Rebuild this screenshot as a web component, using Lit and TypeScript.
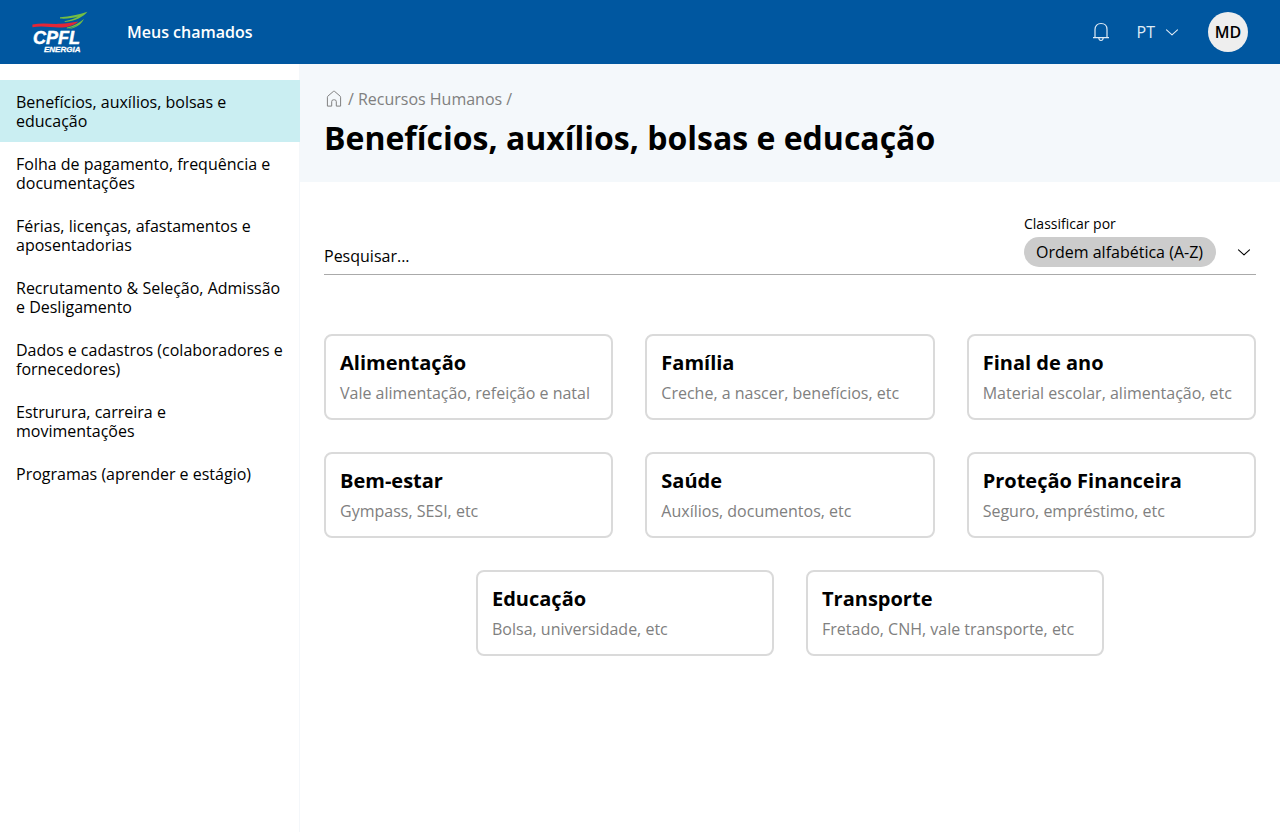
import { LitElement, html, css } from "lit";
import { customElement, state } from "lit/decorators.js";
import { classMap } from "lit/directives/class-map.js";

interface Topic {
  title: string;
  detail: string;
}

const CATEGORIES: string[] = [
  "Benefícios, auxílios, bolsas e educação",
  "Folha de pagamento, frequência e documentações",
  "Férias, licenças, afastamentos e aposentadorias",
  "Recrutamento & Seleção, Admissão e Desligamento",
  "Dados e cadastros (colaboradores e fornecedores)",
  "Estrurura, carreira e movimentações",
  "Programas (aprender e estágio)",
];

const TOPICS: Topic[] = [
  { title: "Alimentação", detail: "Vale alimentação, refeição e natal" },
  { title: "Família", detail: "Creche, a nascer, benefícios, etc" },
  { title: "Final de ano", detail: "Material escolar, alimentação, etc" },
  { title: "Bem-estar", detail: "Gympass, SESI, etc" },
  { title: "Saúde", detail: "Auxílios, documentos, etc" },
  { title: "Proteção Financeira", detail: "Seguro, empréstimo, etc" },
  { title: "Educação", detail: "Bolsa, universidade, etc" },
  { title: "Transporte", detail: "Fretado, CNH, vale transporte, etc" },
];

const chevron = html`<svg class="chevron" width="14" height="8" viewBox="0 0 14 8" fill="none" stroke="currentColor" stroke-width="1.1" stroke-linecap="round" stroke-linejoin="round" aria-hidden="true">
  <path d="M1.5 1.8 7 6.8 12.5 1.8" />
</svg>`;

@customElement("app-header")
class AppHeader extends LitElement {
  static styles = css`
    :host {
      display: block;
      background: #0057a0;
      color: #fff;
    }
    .bar {
      display: flex;
      align-items: center;
      height: 64px;
      padding: 0 32px;
      box-sizing: border-box;
    }
    .logo {
      display: block;
      margin-right: 39px;
    }
    .logo svg,
    .bell svg,
    .chevron {
      display: block;
    }
    .nav {
      color: inherit;
      font-weight: 600;
      text-decoration: none;
      margin-right: auto;
    }
    button {
      font: inherit;
      color: #dfebf5;
      background: none;
      border: 0;
      padding: 0;
      cursor: pointer;
    }
    .bell {
      margin-right: 27px;
    }
    .language {
      display: flex;
      align-items: center;
      gap: 10px;
      margin-right: 29px;
    }
    .avatar {
      width: 40px;
      height: 40px;
      border-radius: 50%;
      background: #eee;
      color: #000;
      font-weight: 600;
    }
  `;

  render() {
    return html`<header class="bar">
      <a class="logo" href="#" aria-label="CPFL Energia">
        <svg width="56" height="42" viewBox="0 0 56 42">
          <path d="M28 6.3C38 5.6 47 3.6 55.4.8 53.4 3.6 50 5.8 46.6 7.4 42.6 9.2 38 10.3 32.8 11L32.6 10.2C38.4 9 42.6 7.8 46 5.6 40.8 7.3 34.8 7.9 28 7.6Z" fill="#73be44" />
          <path d="M34.8 16.6C41.4 15 47.4 12 51.9 8 49.4 13.4 43.8 17.4 36 18.1 40.2 16.8 43.2 15.6 45.4 14 42.4 15.8 39 17.2 34.8 17.6Z" fill="#73be44" />
          <path d="M.4 13.4C10 11.8 19 13.2 28 12.8 34.4 12.6 40 11.8 46.4 10.6 41.4 14.8 35 16.8 26.6 16.6 18.6 16.2 9.6 14.6.4 16.2Z" fill="#e32636" />
          <text x="1" y="33" fill="#fff" font-family="'Liberation Sans', sans-serif" font-size="18" font-weight="700" font-style="italic" stroke="#fff" stroke-width=".5">CPFL</text>
          <text x="12" y="41" fill="#fff" font-family="'Liberation Sans', sans-serif" font-size="8" font-weight="700" font-style="italic" stroke="#fff" stroke-width=".3">ENERGIA</text>
        </svg>
      </a>
      <a class="nav" href="#">Meus chamados</a>
      <button class="bell" aria-label="Notificações">
        <svg width="18" height="20" viewBox="0 0 18 20" fill="none" stroke="currentColor" stroke-width="1.2">
          <path d="M3 15.5V7.5C3 3.7 5.4 1.5 9 1.5S15 3.7 15 7.5V15.5M1 15.6H17M6.8 16C7 17.7 7.7 18.5 9 18.5S11 17.7 11.2 16" />
        </svg>
      </button>
      <button class="language" aria-label="Idioma: PT">PT ${chevron}</button>
      <button class="avatar" aria-label="Perfil MD">MD</button>
    </header>`;
  }
}

@customElement("topic-card")
class TopicCard extends LitElement {
  static properties = { topic: { attribute: false } };
  declare topic: Topic;

  static styles = css`
    :host {
      display: block;
      flex: 1 1 280px;
      max-width: 298px;
    }
    .card {
      display: block;
      padding: 15px 14px 13px;
      border: 2px solid #dadada;
      border-radius: 8px;
      background: #fff;
      color: inherit;
      text-decoration: none;
    }
    .title {
      margin: 0 0 6px;
      font-size: 20px;
      line-height: 24px;
      font-weight: 700;
    }
    .detail {
      margin: 0;
      line-height: 24px;
      color: #808080;
    }
  `;

  render() {
    return html`<a class="card" href="#">
      <h2 class="title">${this.topic.title}</h2>
      <p class="detail">${this.topic.detail}</p>
    </a>`;
  }
}

@customElement("app-root")
class AppRoot extends LitElement {
  @state() selected = 0;

  static styles = css`
    :host {
      display: flex;
      flex-direction: column;
      min-height: 100vh;
      background: #fff;
      color: #000;
      font: 16px/20px "Open Sans", "Noto Sans", sans-serif;
    }
    .layout {
      flex: 1;
      display: grid;
      grid-template-columns: 300px minmax(0, 1fr);
    }
    .sidebar {
      padding-top: 16px;
      box-shadow: inset -1px 0 #f4f7fa;
    }
    .menu {
      list-style: none;
      margin: 0;
      padding: 0;
    }
    .item {
      display: block;
      padding: 13px 16px 11px;
      line-height: 19px;
      color: inherit;
      text-decoration: none;
    }
    .active {
      background: #caeef2;
    }
    .banner {
      background: #f4f8fb;
      padding: 24px;
    }
    .crumbs {
      display: flex;
      align-items: center;
      gap: 4px;
      line-height: 22px;
      color: #808080;
    }
    .crumbs a {
      color: inherit;
      text-decoration: none;
    }
    .home svg,
    .chevron {
      display: block;
    }
    .heading {
      margin: 8px 0 0;
      font-size: 32px;
      line-height: 40px;
      font-weight: 700;
    }
    .content {
      padding: 32px 24px;
    }
    .filters {
      display: flex;
      align-items: flex-end;
      border-bottom: 1px solid #aaa;
      padding-bottom: 7px;
      margin-bottom: 59px;
    }
    .search {
      flex: 1;
      min-width: 0;
      font: inherit;
      color: inherit;
      border: 0;
      padding: 0;
      height: 22px;
      background: none;
      outline: none;
    }
    .search::placeholder {
      color: #000;
      opacity: 1;
    }
    .sort {
      display: grid;
      grid-template-columns: auto 14px;
      column-gap: 21px;
      align-items: center;
      padding-right: 5px;
    }
    .caption {
      grid-column: 1 / -1;
      font-size: 14px;
      line-height: 20px;
      margin-bottom: 3px;
    }
    .select {
      appearance: none;
      font: inherit;
      color: inherit;
      height: 30px;
      padding: 0 12px;
      border: 0;
      border-radius: 15px;
      background: #ccc;
    }
    .topics {
      display: flex;
      flex-wrap: wrap;
      justify-content: center;
      gap: 32px;
    }
  `;

  private choose(event: Event, index: number) {
    event.preventDefault();
    this.selected = index;
  }

  render() {
    return html`
      <app-header></app-header>
      <div class="layout">
        <nav class="sidebar" aria-label="Categorias">
          <ul class="menu">
            ${CATEGORIES.map(
              (name, i) => html`<li>
                <a
                  href="#"
                  class=${classMap({ item: true, active: i === this.selected })}
                  @click=${(e: Event) => this.choose(e, i)}
                  >${name}</a
                >
              </li>`
            )}
          </ul>
        </nav>
        <main>
          <div class="banner">
            <nav class="crumbs" aria-label="Trilha">
              <a class="home" href="#" aria-label="Início">
                <svg width="20" height="20" viewBox="0 0 20 20" fill="none" stroke="currentColor" stroke-width="1" stroke-linejoin="round">
                  <path d="M3.4 17.1V8.2Q3.4 7.6 3.8 7.2L9.4 2.4Q10 1.9 10.6 2.4L16.2 7.2Q16.6 7.6 16.6 8.2V17.1H12.3V12.6Q12.3 10.8 10.5 10.8H9.5Q7.7 10.8 7.7 12.6V17.1Z" />
                </svg>
              </a>
              <span>/</span>
              <a href="#">Recursos Humanos</a>
              <span>/</span>
            </nav>
            <h1 class="heading">Benefícios, auxílios, bolsas e educação</h1>
          </div>
          <div class="content">
            <div class="filters">
              <input class="search" type="search" placeholder="Pesquisar..." aria-label="Pesquisar" />
              <div class="sort">
                <label class="caption" for="sort">Classificar por</label>
                <select class="select" id="sort">
                  <option>Ordem alfabética (A-Z)</option>
                </select>
                ${chevron}
              </div>
            </div>
            <div class="topics">
              ${TOPICS.map((t) => html`<topic-card .topic=${t}></topic-card>`)}
            </div>
          </div>
        </main>
      </div>
    `;
  }
}
